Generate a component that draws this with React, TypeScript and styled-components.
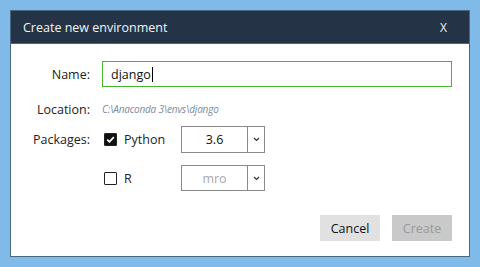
import styled, { createGlobalStyle } from 'styled-components';

const GlobalStyle = createGlobalStyle`
    html, body {
        margin: 0;
        padding: 0;
        background: #7fbae8;
    }
    body {
        font-family: 'Open Sans', 'Noto Sans', sans-serif;
        font-size: 12.5px;
        color: #222;
    }
`;

function Chevron() {
    return (
        <svg width="7" height="5" viewBox="0 0 7 5">
            <polyline points="1,1 3.5,3.5 6,1" fill="none" stroke="#333" strokeWidth="1.2" />
        </svg>
    );
}

function Check({ checked }: { checked: boolean }) {
    return (
        <CheckBox $checked={checked}>
            {checked && (
                <svg width="11" height="11" viewBox="0 0 11 11">
                    <polyline points="2.2,5.6 4.5,7.8 8.8,3.2" fill="none" stroke="#fff" strokeWidth="1.8" />
                </svg>
            )}
        </CheckBox>
    );
}

export default function App(){
    return (
        <>
            <GlobalStyle />
            <Dialog>
                <Header>
                    <Title>Create new environment</Title>
                    <Close>X</Close>
                </Header>
                <Body>
                    <Row $mt={17} $h={26}>
                        <Label>Name:</Label>
                        <NameInput>
                            django<Caret />
                        </NameInput>
                    </Row>
                    <Row $mt={13} $h={18}>
                        <Label>Location:</Label>
                        <Path>C:\Anaconda 3\envs\django</Path>
                    </Row>
                    <Row $mt={8} $h={27}>
                        <Label>Packages:</Label>
                        <Package>
                            <Check checked />
                            <PackageName>Python</PackageName>
                        </Package>
                        <Select>
                            <SelectValue $disabled={false}>3.6</SelectValue>
                            <SelectArrow><Chevron /></SelectArrow>
                        </Select>
                    </Row>
                    <Row $mt={12} $h={26}>
                        <Label />
                        <Package>
                            <Check checked={false} />
                            <PackageName>R</PackageName>
                        </Package>
                        <Select>
                            <SelectValue $disabled>mro</SelectValue>
                            <SelectArrow><Chevron /></SelectArrow>
                        </Select>
                    </Row>
                    <Actions>
                        <Button>Cancel</Button>
                        <Button $disabled>Create</Button>
                    </Actions>
                </Body>
            </Dialog>
        </>
    );
}

const Dialog = styled.div`
    margin: 10px;
    width: 460px;
    height: 247px;
    box-sizing: border-box;
    border: 1px solid #4b6780;
    background: #fff;
    display: flex;
    flex-direction: column;
`;

const Header = styled.div`
    height: 32px;
    background: #243446;
    border-bottom: 1px solid #4b6780;
    display: flex;
    align-items: center;
    justify-content: space-between;
    padding: 0 22px 0 12px;
`;

const Title = styled.span`
    color: #f2f4f6;
    font-size: 12.5px;
`;

const Close = styled.span`
    color: #f2f4f6;
    font-size: 12px;
`;

const Body = styled.div`
    flex: 1;
    display: flex;
    flex-direction: column;
    padding-right: 17px;
`;

const Row = styled.div<{ $mt: number; $h: number }>`
    display: flex;
    align-items: center;
    margin-top: ${p => p.$mt}px;
    height: ${p => p.$h}px;
`;

const Label = styled.span`
    width: 79px;
    margin-right: 12px;
    text-align: right;
    color: #222;
`;

const NameInput = styled.div`
    flex: 1;
    height: 100%;
    box-sizing: border-box;
    border: 1px solid #45b530;
    display: flex;
    align-items: center;
    padding-left: 8px;
    color: #111;
`;

const Caret = styled.span`
    display: inline-block;
    width: 1px;
    height: 15px;
    background: #000;
    margin-left: 1px;
`;

const Path = styled.span`
    font-style: italic;
    font-size: 10px;
    letter-spacing: -0.2px;
    color: #7d8c9a;
`;

const Package = styled.div`
    width: 79px;
    display: flex;
    align-items: center;
`;

const CheckBox = styled.span<{ $checked: boolean }>`
    width: 13px;
    height: 13px;
    margin-left: 2px;
    box-sizing: border-box;
    border-radius: 1px;
    border: 1.5px solid #222;
    background: ${p => (p.$checked ? '#111' : '#fff')};
    display: flex;
    align-items: center;
    justify-content: center;
`;

const PackageName = styled.span`
    margin-left: 7px;
    color: #222;
`;

const Select = styled.div`
    width: 84px;
    height: 100%;
    box-sizing: border-box;
    border: 1px solid #8a8a8a;
    display: flex;
`;

const SelectValue = styled.span<{ $disabled: boolean }>`
    flex: 1;
    display: flex;
    align-items: center;
    justify-content: center;
    color: ${p => (p.$disabled ? '#a8a8a8' : '#111')};
`;

const SelectArrow = styled.span`
    width: 16px;
    border-left: 1px solid #8a8a8a;
    display: flex;
    align-items: center;
    justify-content: center;
`;

const Actions = styled.div`
    margin-top: 24px;
    display: flex;
    justify-content: flex-end;
    gap: 12px;
`;

const Button = styled.button<{ $disabled?: boolean }>`
    width: 60px;
    height: 26px;
    border: none;
    padding: 0;
    font-family: inherit;
    font-size: 12.5px;
    background: ${p => (p.$disabled ? '#c9c9c9' : '#e1e1e1')};
    color: ${p => (p.$disabled ? '#9a9a9a' : '#111')};
`;
